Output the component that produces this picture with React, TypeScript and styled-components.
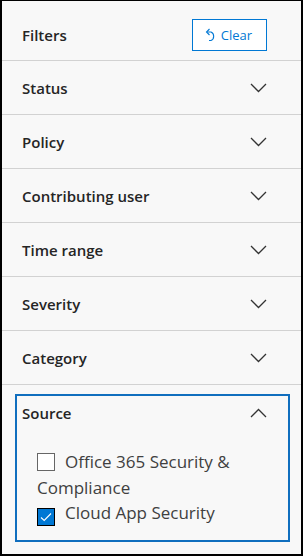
import * as React from 'react';
import styled, { createGlobalStyle } from 'styled-components';

const GlobalStyle = createGlobalStyle`
    html, body {
        margin: 0;
        padding: 0;
        background: #ffffff;
    }
    body {
        font-family: "Open Sans", "Noto Sans", "Liberation Sans", sans-serif;
    }
`;

const Panel = styled.div`
    width: 303px;
    height: 556px;
    box-sizing: border-box;
    background-color: #f8f8f8;
    border-style: solid;
    border-color: #000000;
    border-width: 1px 2px 2px 2px;
    display: flex;
    flex-direction: column;
`;

const Header = styled.div`
    height: 60px;
    box-sizing: border-box;
    display: flex;
    align-items: center;
    justify-content: space-between;
    padding: 8px 34px 0 20px;
    border-bottom: 1px solid #d2d2d2;
    flex-shrink: 0;
`;

const Title = styled.span`
    font-size: 15px;
    font-weight: 600;
    color: #252525;
`;

const ClearButton = styled.button`
    width: 75px;
    height: 32px;
    box-sizing: border-box;
    border: 1px solid #0078d4;
    background: #ffffff;
    color: #0078d4;
    font-family: inherit;
    font-size: 13px;
    display: flex;
    align-items: center;
    justify-content: center;
    gap: 5px;
    padding: 0 2px 0 0;
    cursor: pointer;
`;

const Row = styled.div<{ $divider?: boolean }>`
    height: 53px;
    display: flex;
    align-items: center;
    justify-content: space-between;
    padding: 0 34px 0 20px;
    border-bottom: ${(p) => (p.$divider ? '1px solid #d2d2d2' : 'none')};
    flex-shrink: 0;
`;

const RowLabel = styled.span`
    font-size: 15px;
    font-weight: 600;
    color: #252525;
`;

const SourceBox = styled.div`
    margin: 9px 11px 0 13px;
    border: 2px solid #106ebe;
    padding: 0 21px 14px 5px;
    display: flex;
    flex-direction: column;
`;

const SourceHead = styled.div`
    height: 34px;
    display: flex;
    align-items: center;
    justify-content: space-between;
`;

const Options = styled.div`
    margin-top: 19px;
    padding-left: 15px;
    display: flex;
    flex-direction: column;
`;

const Option = styled.label`
    font-size: 17px;
    line-height: 25.5px;
    color: #404040;
`;

const Box = styled.span<{ $checked?: boolean }>`
    display: inline-flex;
    align-items: center;
    justify-content: center;
    width: 18px;
    height: 18px;
    box-sizing: border-box;
    vertical-align: -3px;
    margin-right: 10px;
    border: 1px solid ${(p) => (p.$checked ? '#000000' : '#666666')};
    background: ${(p) => (p.$checked ? '#0078d4' : '#ffffff')};
`;

const Chevron = ({ up }: { up?: boolean }) => (
    <svg width="17" height="10" viewBox="0 0 17 10">
        <path
            d={up ? 'M1 9 L8.5 1.5 L16 9' : 'M1 1 L8.5 8.5 L16 1'}
            fill="none"
            stroke="#333333"
            strokeWidth="1.3"
        />
    </svg>
);

const UndoIcon = () => (
    <svg width="11" height="14" viewBox="0 0 11 14">
        <path d="M2 4 H6 A4 4.5 0 0 1 6 12.5 H4" fill="none" stroke="#0078d4" strokeWidth="1.1" />
        <path d="M4.5 1 L1.5 4 L4.5 7" fill="none" stroke="#0078d4" strokeWidth="1.1" />
    </svg>
);

const Check = () => (
    <svg width="12" height="10" viewBox="0 0 12 10">
        <path d="M1 5.5 L4.2 8.5 L11 1.5" fill="none" stroke="#ffffff" strokeWidth="1.1" />
    </svg>
);

const filters = ['Status', 'Policy', 'Contributing user', 'Time range', 'Severity', 'Category'];

const App: React.FC = () => {
    return (
        <>
            <GlobalStyle />
            <Panel>
                <Header>
                    <Title>Filters</Title>
                    <ClearButton>
                        <UndoIcon />
                        Clear
                    </ClearButton>
                </Header>
                {filters.map((f) => (
                    <Row key={f} $divider>
                        <RowLabel>{f}</RowLabel>
                        <Chevron />
                    </Row>
                ))}
                <SourceBox>
                    <SourceHead>
                        <RowLabel>Source</RowLabel>
                        <Chevron up />
                    </SourceHead>
                    <Options>
                        <Option>
                            <Box />
                            Office 365 Security &amp; Compliance
                        </Option>
                        <Option>
                            <Box $checked>
                                <Check />
                            </Box>
                            Cloud App Security
                        </Option>
                    </Options>
                </SourceBox>
            </Panel>
        </>
    );
};

export default App;
